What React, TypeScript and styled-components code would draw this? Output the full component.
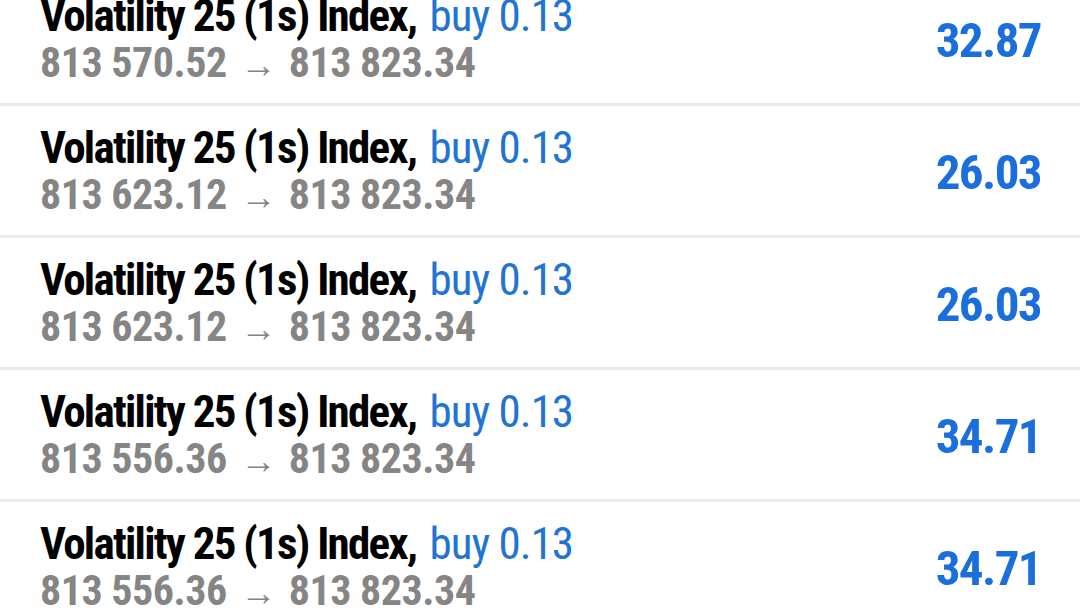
import React from "react";
import styled, { createGlobalStyle } from "styled-components";

const Global = createGlobalStyle`
  html, body { margin: 0; padding: 0; background: #ffffff; }
  body { width: 1080px; height: 608px; overflow: hidden; font-family: "Roboto Condensed", Roboto, "Liberation Sans", sans-serif; }
`;

const List = styled.div`
  display: flex;
  flex-direction: column;
  margin-top: -26px;
`;

const Row = styled.div`
  display: flex;
  align-items: center;
  justify-content: space-between;
  height: 129px;
  box-sizing: content-box;
  padding: 0 39px 0 40px;
  border-bottom: 3px solid #ebebeb;
`;

const Info = styled.div`
  align-self: flex-start;
  display: flex;
  flex-direction: column;
  padding-top: 18px;
`;

const Title = styled.div`
  font-size: 45px;
  line-height: 47px;
  font-weight: 700;
  color: #000000;
  white-space: nowrap;
  letter-spacing: -1.75px;
`;

const Deal = styled.span`
  font-weight: 400;
  color: #1f74d4;
  letter-spacing: -1px;
  margin-left: 4px;
`;

const Prices = styled.div`
  font-size: 42px;
  line-height: 48px;
  font-weight: 700;
  color: #858585;
  white-space: nowrap;
  letter-spacing: -0.5px;
`;

const Arrow = styled.span`
  font-weight: 400;
  font-size: 36px;
  letter-spacing: 0;
  margin: 0 12px 0 14px;
`;

const Profit = styled.div`
  font-size: 49px;
  font-weight: 700;
  color: #1a6fdc;
  line-height: 1;
  padding-top: 4px;
  letter-spacing: -1.6px;
`;

const rows = [
  { open: "813 570.52", close: "813 823.34", profit: "32.87" },
  { open: "813 623.12", close: "813 823.34", profit: "26.03" },
  { open: "813 623.12", close: "813 823.34", profit: "26.03" },
  { open: "813 556.36", close: "813 823.34", profit: "34.71" },
  { open: "813 556.36", close: "813 823.34", profit: "34.71" },
];

export default function App() {
  return (
    <>
      <Global />
      <List>
        {rows.map((r, i) => (
          <Row key={i}>
            <Info>
              <Title>
                Volatility 25 (1s) Index,<Deal> buy 0.13</Deal>
              </Title>
              <Prices>
                {r.open}
                <Arrow>→</Arrow>
                {r.close}
              </Prices>
            </Info>
            <Profit>{r.profit}</Profit>
          </Row>
        ))}
      </List>
    </>
  );
}
